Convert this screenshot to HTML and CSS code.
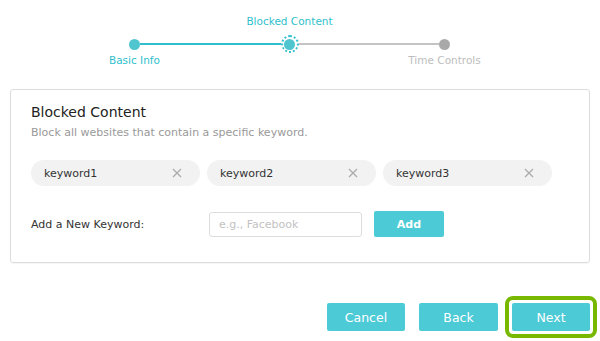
FILE: index.html
```html
<!DOCTYPE html>
<html lang="en">
<head>
    <meta charset="UTF-8">
    <meta name="viewport" content="width=device-width, initial-scale=1.0">
    <title>Blocked Content</title>
    <link rel="stylesheet" href="styles.css">
</head>
<body>
    <div class="stepper">
        <div class="step-top"></div>
        <div class="step-top current-label">Blocked Content</div>
        <div class="step-top"></div>

        <div class="track">
            <span class="line none"></span><span class="dot done"></span><span class="line done"></span>
        </div>
        <div class="track">
            <span class="line done"></span><span class="dot current"><span class="dot-inner"></span></span><span class="line"></span>
        </div>
        <div class="track">
            <span class="line"></span><span class="dot"></span><span class="line none"></span>
        </div>

        <div class="step-bottom done-label">Basic Info</div>
        <div class="step-bottom"></div>
        <div class="step-bottom todo-label">Time Controls</div>
    </div>

    <div class="card">
        <h2 class="card-title">Blocked Content</h2>
        <p class="card-desc">Block all websites that contain a specific keyword.</p>

        <div class="chips">
            <div class="chip">
                <span>keyword1</span>
                <svg class="chip-x" viewBox="0 0 10 10"><path d="M1 1L9 9M9 1L1 9"/></svg>
            </div>
            <div class="chip">
                <span>keyword2</span>
                <svg class="chip-x" viewBox="0 0 10 10"><path d="M1 1L9 9M9 1L1 9"/></svg>
            </div>
            <div class="chip">
                <span>keyword3</span>
                <svg class="chip-x" viewBox="0 0 10 10"><path d="M1 1L9 9M9 1L1 9"/></svg>
            </div>
        </div>

        <div class="add-row">
            <label class="add-label">Add a New Keyword:</label>
            <input type="text" class="add-input" placeholder="e.g., Facebook">
            <button class="btn btn-add">Add</button>
        </div>
    </div>

    <div class="actions">
        <button class="btn btn-main">Cancel</button>
        <button class="btn btn-main btn-back">Back</button>
        <span class="focus-ring"><button class="btn btn-main">Next</button></span>
    </div>
</body>
</html>
```

FILE: styles.css
```css
body {
    margin: 0;
    font-family: "DejaVu Sans", sans-serif;
    color: #333;
    background: #fff;
}

/* stepper */
.stepper {
    display: grid;
    grid-template-columns: 155px 155px 155px;
    margin: 0 0 22px 57px;
    padding-top: 14px;
    font-size: 10.5px;
}

.step-top, .step-bottom {
    text-align: center;
    line-height: 14px;
    white-space: nowrap;
}

.current-label, .done-label {
    color: #2fbfcd;
}

.todo-label {
    color: #bdbdbd;
}

.track {
    display: flex;
    align-items: center;
    height: 18px;
    margin-top: 7px;
}

.line {
    flex: 1;
    height: 2px;
    background: #c4c4c4;
}

.line.done {
    background: #2fbfcd;
}

.line.none {
    background: transparent;
}

.dot {
    width: 11px;
    height: 11px;
    border-radius: 50%;
    background: #a9a9a9;
}

.dot.done {
    background: #4ec5cf;
}

.dot.current {
    width: 14px;
    height: 14px;
    border: 2px dotted #2fbfcd;
    background: transparent;
    display: flex;
    align-items: center;
    justify-content: center;
}

.dot-inner {
    width: 11px;
    height: 11px;
    border-radius: 50%;
    background: #4ec5cf;
}

/* card */
.card {
    margin: 0 10px;
    border: 1px solid #dcdcdc;
    border-radius: 3px;
    padding: 12px 20px 25px;
    box-shadow: 0 1px 1px rgba(0, 0, 0, 0.04);
}

.card-title {
    margin: 0;
    font-size: 14px;
    font-weight: normal;
    line-height: 20px;
    color: #222;
}

.card-desc {
    margin: 3px 0 0;
    font-size: 11px;
    line-height: 16px;
    color: #999;
}

.chips {
    display: flex;
    gap: 7px;
    margin-top: 19px;
}

.chip {
    width: 169px;
    height: 26px;
    box-sizing: border-box;
    border-radius: 13px;
    background: #f2f2f2;
    padding: 0 18px 0 13px;
    display: flex;
    align-items: center;
    justify-content: space-between;
    font-size: 11px;
    color: #333;
}

.chip-x {
    width: 10px;
    height: 10px;
    stroke: #ababab;
    stroke-width: 1.3;
    fill: none;
}

.add-row {
    display: flex;
    align-items: center;
    margin-top: 25px;
    font-size: 11px;
}

.add-label {
    width: 178px;
    color: #333;
}

.add-input {
    width: 153px;
    height: 25px;
    box-sizing: border-box;
    border: 1px solid #dddddd;
    border-radius: 3px;
    padding: 0 9px;
    font-family: inherit;
    font-size: 11px;
    color: #333;
}

.add-input::placeholder {
    color: #c2c2c2;
}

.btn {
    border: none;
    border-radius: 2px;
    background: #4ccad6;
    color: #fff;
    font-family: inherit;
    cursor: pointer;
}

.btn-add {
    margin-left: 12px;
    width: 70px;
    height: 26px;
    font-size: 11px;
    font-weight: bold;
}

/* bottom buttons */
.actions {
    display: flex;
    justify-content: flex-end;
    align-items: center;
    margin: 33px 3px 0 0;
}

.btn-main {
    width: 78px;
    height: 28px;
    font-size: 12.5px;
}

.btn-back {
    width: 79px;
    margin: 0 7px 0 14px;
}

.focus-ring {
    display: flex;
    border: 4px solid #78b800;
    border-radius: 8px;
    padding: 3px;
}
```
